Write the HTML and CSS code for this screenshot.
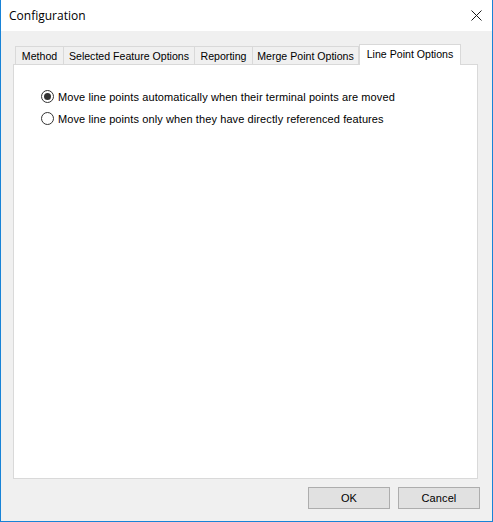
FILE: index.html
```html
<!DOCTYPE html>
<html>
<head>
<meta charset="utf-8">
<link rel="stylesheet" href="styles.css">
</head>
<body>
<div class="window">
  <div class="titlebar">
    <span class="title">Configuration</span>
    <svg class="close" width="11" height="11" viewBox="0 0 11 11"><path d="M0.5 0.5 L10.5 10.5 M10.5 0.5 L0.5 10.5" stroke="#1a1a1a" stroke-width="1" fill="none"/></svg>
  </div>
  <div class="content">
    <div class="tabs">
      <div class="tab t1">Method</div>
      <div class="tab t2">Selected Feature Options</div>
      <div class="tab t3">Reporting</div>
      <div class="tab t4">Merge Point Options</div>
      <div class="tab active t5">Line Point Options</div>
    </div>
    <div class="panel">
      <label class="radio-row"><span class="radio checked"></span><span>Move line points automatically when their terminal points are moved</span></label>
      <label class="radio-row"><span class="radio"></span><span>Move line points only when they have directly referenced features</span></label>
    </div>
    <div class="buttons">
      <button class="btn">OK</button>
      <button class="btn">Cancel</button>
    </div>
  </div>
</div>
</body>
</html>
```
FILE: styles.css
```css
* { box-sizing: border-box; }
html, body { margin: 0; padding: 0; background: #fff; }
.window {
  width: 493px;
  height: 522px;
  border: 1px solid #1883d7;
  border-top: none;
  background: #f0f0f0;
  display: flex;
  flex-direction: column;
  font-family: "Liberation Sans", Arial, sans-serif;
  font-size: 11px;
  letter-spacing: 0.1px;
  color: #000;
}
.titlebar {
  height: 31px;
  background: #fff;
  display: flex;
  align-items: center;
  justify-content: space-between;
  padding: 0 10px 0 8px;
}
.title {
  font-family: "Open Sans", "Noto Sans", sans-serif;
  font-size: 12px;
  letter-spacing: 0;
  color: #000;
  padding-bottom: 1px;
}
.close { display: block; margin-top: -1px; }
.content {
  flex: 1;
  display: flex;
  flex-direction: column;
  padding: 13px 14px 0 12px;
}
.tabs {
  height: 20px;
  display: flex;
  align-items: flex-end;
  padding-left: 2px;
  position: relative;
  z-index: 1;
}
.tab {
  height: 18px;
  border: 1px solid #d9d9d9;
  border-bottom: none;
  border-right: none;
  background: #f0f0f0;
  display: flex;
  align-items: center;
  justify-content: center;
  white-space: nowrap;
  padding-top: 1px;
  font-size: 10.6px;
  letter-spacing: 0;
}
.t1 { width: 48px; }
.t2 { width: 131px; }
.t3 { width: 58px; }
.t4 { width: 107px; border-right: 1px solid #d9d9d9; }
.tab.active {
  height: 21px;
  margin-bottom: -1px;
  background: #fff;
  width: 102px;
  border: 1px solid #d9d9d9;
  border-bottom: none;
  padding-top: 0;
  padding-bottom: 2px;
}
.panel {
  height: 415px;
  background: #fff;
  border: 1px solid #d9d9d9;
  padding: 25px 0 0 27px;
  display: flex;
  flex-direction: column;
  gap: 9px;
}
.radio-row {
  display: flex;
  align-items: center;
  height: 13px;
  gap: 4px;
}
.radio {
  width: 13px;
  height: 13px;
  border: 1px solid #333;
  border-radius: 50%;
  background: #fff;
  display: flex;
  align-items: center;
  justify-content: center;
  flex: none;
}
.radio.checked::after {
  content: "";
  width: 7px;
  height: 7px;
  border-radius: 50%;
  background: #333;
}
.buttons {
  display: flex;
  justify-content: flex-end;
  gap: 8px;
  margin-top: 8px;
  margin-right: -2px;
}
.btn {
  width: 82px;
  height: 22px;
  background: #e1e1e1;
  border: 1px solid #adadad;
  font-family: "Liberation Sans", Arial, sans-serif;
  font-size: 11px;
  letter-spacing: 0.1px;
  color: #000;
  padding: 0;
  margin: 0;
}
```
